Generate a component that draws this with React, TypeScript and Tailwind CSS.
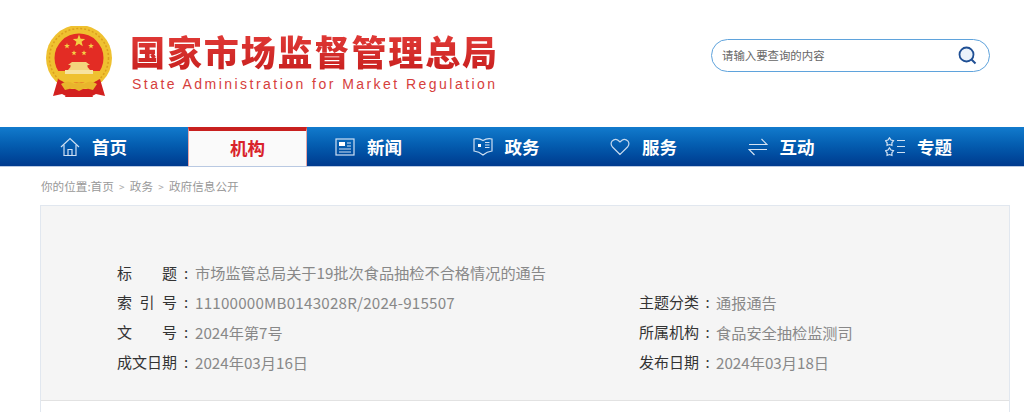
import React from 'react';

const cjk = { fontFamily: '"Noto Sans CJK SC", "Noto Sans", sans-serif' };

const star = (cx: number, cy: number, r: number, inner = 0.42) => {
  const pts: string[] = [];
  for (let i = 0; i < 10; i++) {
    const rad = i % 2 === 0 ? r : r * inner;
    const a = (Math.PI / 5) * i - Math.PI / 2;
    pts.push(`${(cx + rad * Math.cos(a)).toFixed(2)},${(cy + rad * Math.sin(a)).toFixed(2)}`);
  }
  return pts.join(' ');
};

const Emblem = () => (
  <svg width="72" height="74" viewBox="0 0 72 74" className="shrink-0">
    <circle cx="36" cy="32" r="33" fill="#efc130" />
    <circle cx="36" cy="32" r="29.5" fill="none" stroke="#dc9f1e" strokeWidth="1.5" strokeDasharray="2 2" />
    <circle cx="36" cy="32" r="24.5" fill="#e32c24" />
    <polygon points={star(36, 15, 6.5)} fill="#f4cf44" />
    <polygon points={star(24, 20, 3)} fill="#f4cf44" />
    <polygon points={star(48, 20, 3)} fill="#f4cf44" />
    <polygon points={star(31, 27, 2.8)} fill="#f4cf44" />
    <polygon points={star(41, 27, 2.8)} fill="#f4cf44" />
    <path d="M13 45 L59 45 Q56 52 48 56 L24 56 Q16 52 13 45 Z" fill="#efc130" />
    <path d="M29 36 L43 36 L47 39 L44.5 39 L44.5 41 L47 44 L25 44 L27.5 41 L27.5 39 L25 39 Z" fill="#f3d57c" />
    <rect x="22" y="44" width="28" height="4" fill="#f7e3a0" />
    <path d="M15 53 L10 70 L19 68 L25 71 L28 60 Z" fill="#d3201f" />
    <path d="M57 53 L62 70 L53 68 L47 71 L44 60 Z" fill="#d3201f" />
    <path d="M26 63 L46 63 L50 71 L22 71 Z" fill="#d3201f" />
    <path d="M18 58 Q25 53 31 58 L36 56 L41 58 Q47 53 54 58 L50 64 L42 62 L36 65 L30 62 L22 64 Z" fill="#e9b52c" />
  </svg>
);

const HomeIcon = () => (
  <svg width="20" height="20" viewBox="0 0 20 20" fill="none" stroke="#cfe0f3" strokeWidth="1.2">
    <path d="M1 10 L10 1.5 L19 10" />
    <path d="M4 8 V18.5 H16 V8" />
    <path d="M8 18.5 V12.5 H12 V18.5" />
  </svg>
);

const NewsIcon = () => (
  <svg width="20" height="18" viewBox="0 0 20 18" fill="none" stroke="#cfe0f3" strokeWidth="1.2">
    <rect x="1" y="1" width="18" height="16" />
    <rect x="4" y="4" width="6" height="4" fill="#ffffff" stroke="none" />
    <path d="M12 5 H16 M12 8 H16 M4 11 H16 M4 14 H16" />
  </svg>
);

const BookIcon = () => (
  <svg width="20" height="19" viewBox="0 0 20 19" fill="none" stroke="#cfe0f3" strokeWidth="1.2">
    <path d="M1 2 Q6 1 10 3.5 Q14 1 19 2 V14 Q14 14.5 10 18 Q6 14.5 1 14 Z" />
    <rect x="5" y="7" width="3" height="3" fill="#ffffff" stroke="none" />
    <path d="M12 5.5 H16.5 M12 8 H16.5 M12 10.5 H16.5" />
  </svg>
);

const HeartIcon = () => (
  <svg width="20" height="18" viewBox="0 0 20 18" fill="none" stroke="#c5d8ee" strokeWidth="1.2">
    <path d="M10 16.5 L2.5 9 Q0 6 2 3.2 Q5 0 8 2.2 L10 4 L12 2.2 Q15 0 18 3.2 Q20 6 17.5 9 Z" />
  </svg>
);

const SwapIcon = () => (
  <svg width="20" height="18" viewBox="0 0 20 18" fill="none" stroke="#d5e3f3" strokeWidth="1.2">
    <path d="M1 6.5 H19 L13.5 1" />
    <path d="M19 11.5 H1 L6.5 17" />
  </svg>
);

const StarListIcon = () => (
  <svg width="20" height="20" viewBox="0 0 20 20" fill="none" stroke="#cfe0f3" strokeWidth="1.2">
    <polygon points={star(4.5, 5, 4.2, 0.6)} />
    <polygon points={star(4.5, 15, 4.2, 0.6)} />
    <path d="M12 3.5 H20 M12 9.5 H20 M12 15.5 H20" />
  </svg>
);

const NavItem = ({ icon, label }: { icon: React.ReactNode; label: string }) => (
  <a className="w-[137.5px] h-full flex items-center pl-[19px] shrink-0">
    <span className="w-5 flex justify-center">{icon}</span>
    <span className="ml-3 text-white text-[17.5px] font-bold leading-none">{label}</span>
  </a>
);

const MetaLabel = ({ chars, colon }: { chars: string[]; colon: string }) => (
  <span className="flex items-center text-[#333] text-[15px]">
    <span className="w-[60px] flex justify-between">
      {chars.map((c, i) => (
        <span key={i}>{c}</span>
      ))}
    </span>
    <span className={`${colon} text-center`}>:</span>
  </span>
);

const MetaCell = ({ label, value, colon = 'w-[18px]', valueClass = '' }: { label: string[]; value: string; colon?: string; valueClass?: string }) => (
  <div className="h-[29.75px] flex items-center">
    <MetaLabel chars={label} colon={colon} />
    <span className={`text-[#888] ${valueClass}`}>{value}</span>
  </div>
);

export default function App() {
  return (
    <div className="w-[1024px] h-[412px] overflow-hidden bg-white flex flex-col" style={cjk}>
      {/* header */}
      <div className="h-[127px] flex shrink-0">
        <div className="ml-[43px] mt-[26px]">
          <Emblem />
        </div>
        <div className="ml-[15px] mt-[31px]">
          <div className="text-[35px] leading-[40px] font-black tracking-[1.9px] whitespace-nowrap bg-gradient-to-b from-[#e23b38] to-[#c9201f] bg-clip-text text-transparent">
            国家市场监督管理总局
          </div>
          <div className="mt-[4px] text-[14px] leading-[18px] tracking-[2.46px] text-[#d6403c] whitespace-nowrap ml-[2px]" style={{ fontFamily: '"Liberation Sans", sans-serif' }}>
            State Administration for Market Regulation
          </div>
        </div>
        <div className="ml-auto mr-[34px] mt-[39px] w-[279px] h-[33px] border-[1.5px] border-[#5fa3dc] rounded-full flex items-center justify-between pl-[10px] pr-[12px]">
          <span className="text-[11.4px] text-[#666]">请输入要查询的内容</span>
          <svg width="19" height="19" viewBox="0 0 19 19" fill="none">
            <circle cx="8.5" cy="8.5" r="7" fill="#eaf2fa" stroke="#1f4f94" strokeWidth="1.8" />
            <path d="M13.5 13.5 L17.5 17.5" stroke="#1f4f94" strokeWidth="2" />
          </svg>
        </div>
      </div>

      {/* nav */}
      <div className="h-[40px] shrink-0 flex pl-[41px] bg-gradient-to-b from-[#127bcd] to-[#003a8e] border-b border-[#b9c9e2]">
        <NavItem icon={<HomeIcon />} label="首页" />
        <div className="w-[137.5px] shrink-0 pl-[9.5px]">
          <div className="w-[119px] h-full bg-[#fafafa] border-t-4 border-x border-t-[#c8201f] border-x-[#e8a6a6] flex items-center justify-center text-[#d9232a] text-[17.5px] font-bold">
            机构
          </div>
        </div>
        <NavItem icon={<NewsIcon />} label="新闻" />
        <NavItem icon={<BookIcon />} label="政务" />
        <NavItem icon={<HeartIcon />} label="服务" />
        <NavItem icon={<SwapIcon />} label="互动" />
        <NavItem icon={<StarListIcon />} label="专题" />
      </div>

      {/* breadcrumb */}
      <div className="h-[38px] shrink-0 pl-[41px] pt-px flex items-center text-[11.6px] text-[#999]">
        <span>你的位置:首页</span>
        <span className="w-[16px] text-center text-[10px] text-[#aaa]">&gt;</span>
        <span>政务</span>
        <span className="w-[16px] text-center text-[10px] text-[#aaa]">&gt;</span>
        <span>政府信息公开</span>
      </div>

      {/* content */}
      <div className="ml-[40px] w-[970px] flex-1 border-x border-t border-[#e1e7ef]">
        <div className="bg-[#f5f5f5] border-b border-[#e2e2e2] h-[195px] pt-[52px] pl-[76px] text-[15.2px]">
          <MetaCell label={['标', '题']} value="市场监管总局关于19批次食品抽检不合格情况的通告" />
          <div className="grid grid-cols-[522px_1fr]">
            <MetaCell label={['索', '引', '号']} value="11100000MB0143028R/2024-915507" valueClass="tracking-[0.2px]" />
            <MetaCell label={['主', '题', '分', '类']} value="通报通告" colon="w-[17px]" />
            <MetaCell label={['文', '号']} value="2024年第7号" />
            <MetaCell label={['所', '属', '机', '构']} value="食品安全抽检监测司" colon="w-[17px]" />
            <MetaCell label={['成', '文', '日', '期']} value="2024年03月16日" />
            <MetaCell label={['发', '布', '日', '期']} value="2024年03月18日" colon="w-[17px]" />
          </div>
        </div>
      </div>
    </div>
  );
}
